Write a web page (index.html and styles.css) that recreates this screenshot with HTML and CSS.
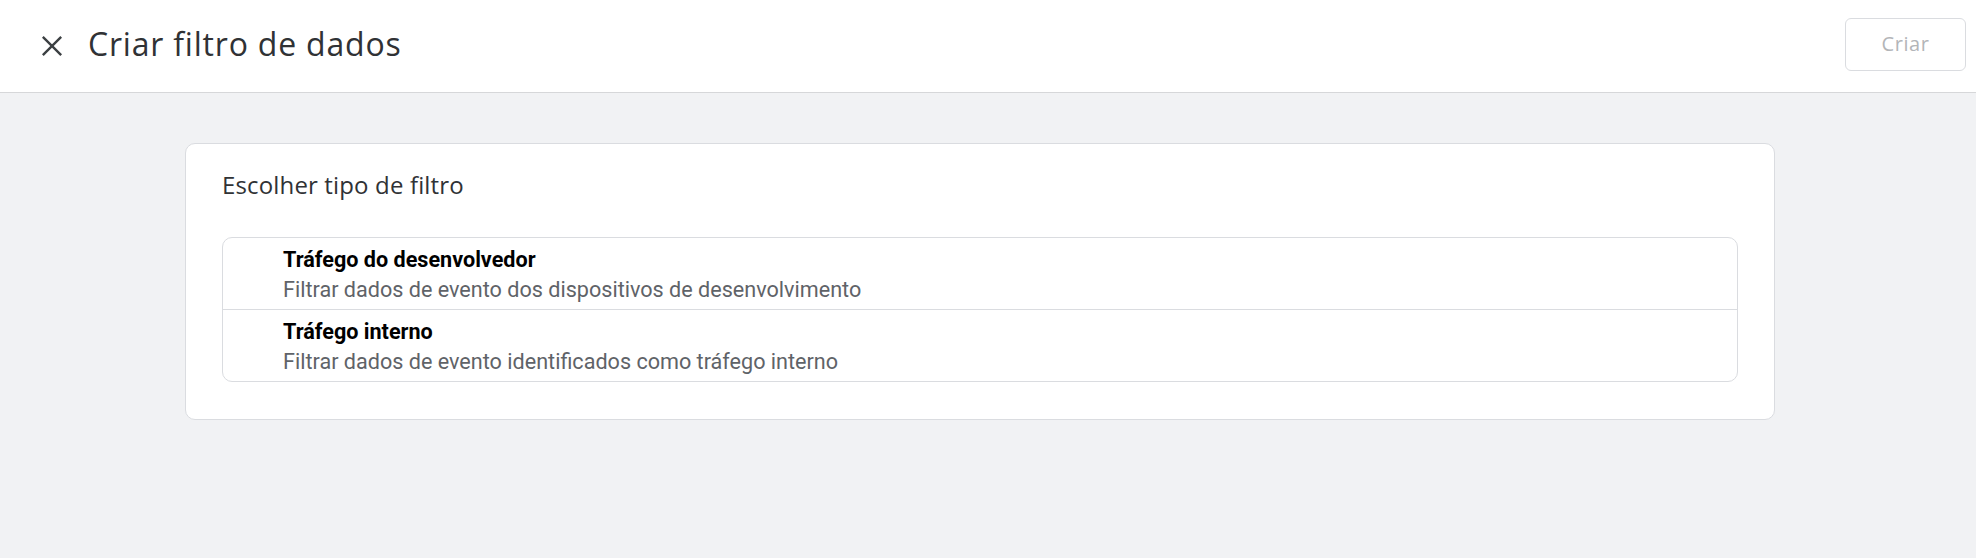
FILE: index.html
```html
<!DOCTYPE html>
<html lang="pt">
<head>
<meta charset="utf-8">
<title>Criar filtro de dados</title>
<link rel="stylesheet" href="styles.css">
</head>
<body>
<header class="topbar">
  <button class="close-btn" aria-label="Fechar">
    <svg width="24" height="24" viewBox="0 0 24 24"><path d="M2 2 L22 22 M22 2 L2 22" stroke="#3c4043" stroke-width="2.6" fill="none"/></svg>
  </button>
  <h1 class="page-title">Criar filtro de dados</h1>
  <button class="create-btn" disabled>Criar</button>
</header>
<main class="content">
  <section class="card">
    <h2 class="card-title">Escolher tipo de filtro</h2>
    <ul class="option-list">
      <li class="option">
        <div class="option-title">Tráfego do desenvolvedor</div>
        <div class="option-desc">Filtrar dados de evento dos dispositivos de desenvolvimento</div>
      </li>
      <li class="option">
        <div class="option-title">Tráfego interno</div>
        <div class="option-desc">Filtrar dados de evento identificados como tráfego interno</div>
      </li>
    </ul>
  </section>
</main>
</body>
</html>
```

FILE: styles.css
```css
* { box-sizing: border-box; }
html, body { margin: 0; padding: 0; }
body {
  background: #f1f2f4;
  font-family: Roboto, "Liberation Sans", sans-serif;
  height: 558px;
  overflow: hidden;
}
.topbar {
  height: 93px;
  background: #fff;
  border-bottom: 1px solid #d6d7d9;
  display: flex;
  align-items: center;
  padding: 0 10px 0 39px;
}
.close-btn {
  width: 26px;
  height: 26px;
  padding: 0;
  border: 0;
  background: none;
  display: flex;
  align-items: center;
  justify-content: center;
  margin-right: 23px;
}
.close-btn svg { width: 22px; height: 22px; }
.page-title {
  margin: 0 0 4px;
  font-family: "Open Sans", sans-serif;
  font-weight: 400;
  font-size: 32px;
  line-height: 40px;
  letter-spacing: 0.8px;
  color: #303235;
  flex: 1;
}
.create-btn {
  width: 121px;
  height: 53px;
  border: 1px solid #dadce0;
  border-radius: 6px;
  background: #fff;
  color: #b3b5b8;
  font-family: "Open Sans", sans-serif;
  font-size: 20px;
  letter-spacing: 0.6px;
  padding: 0 0 3px;
  margin-top: -3px;
}
.content {
  padding: 50px 0 0 185px;
}
.card {
  width: 1590px;
  background: #fff;
  border: 1px solid #dadce0;
  border-radius: 10px;
  padding: 26px 36px 37px;
}
.card-title {
  margin: 0 0 37px;
  font-family: "Open Sans", sans-serif;
  font-weight: 400;
  font-size: 24px;
  line-height: 30px;
  letter-spacing: 0.15px;
  color: #303235;
}
.option-list {
  list-style: none;
  margin: 0;
  padding: 0;
  border: 1px solid #dadce0;
  border-radius: 10px;
}
.option {
  padding: 8px 0 6px 60px;
}
.option + .option { border-top: 1px solid #dadce0; }
.option-title {
  font-weight: 700;
  font-size: 21.6px;
  line-height: 27px;
  color: #000;
  margin-bottom: 3px;
}
.option-desc {
  font-size: 21.6px;
  line-height: 27px;
  color: #5f6368;
}
```
